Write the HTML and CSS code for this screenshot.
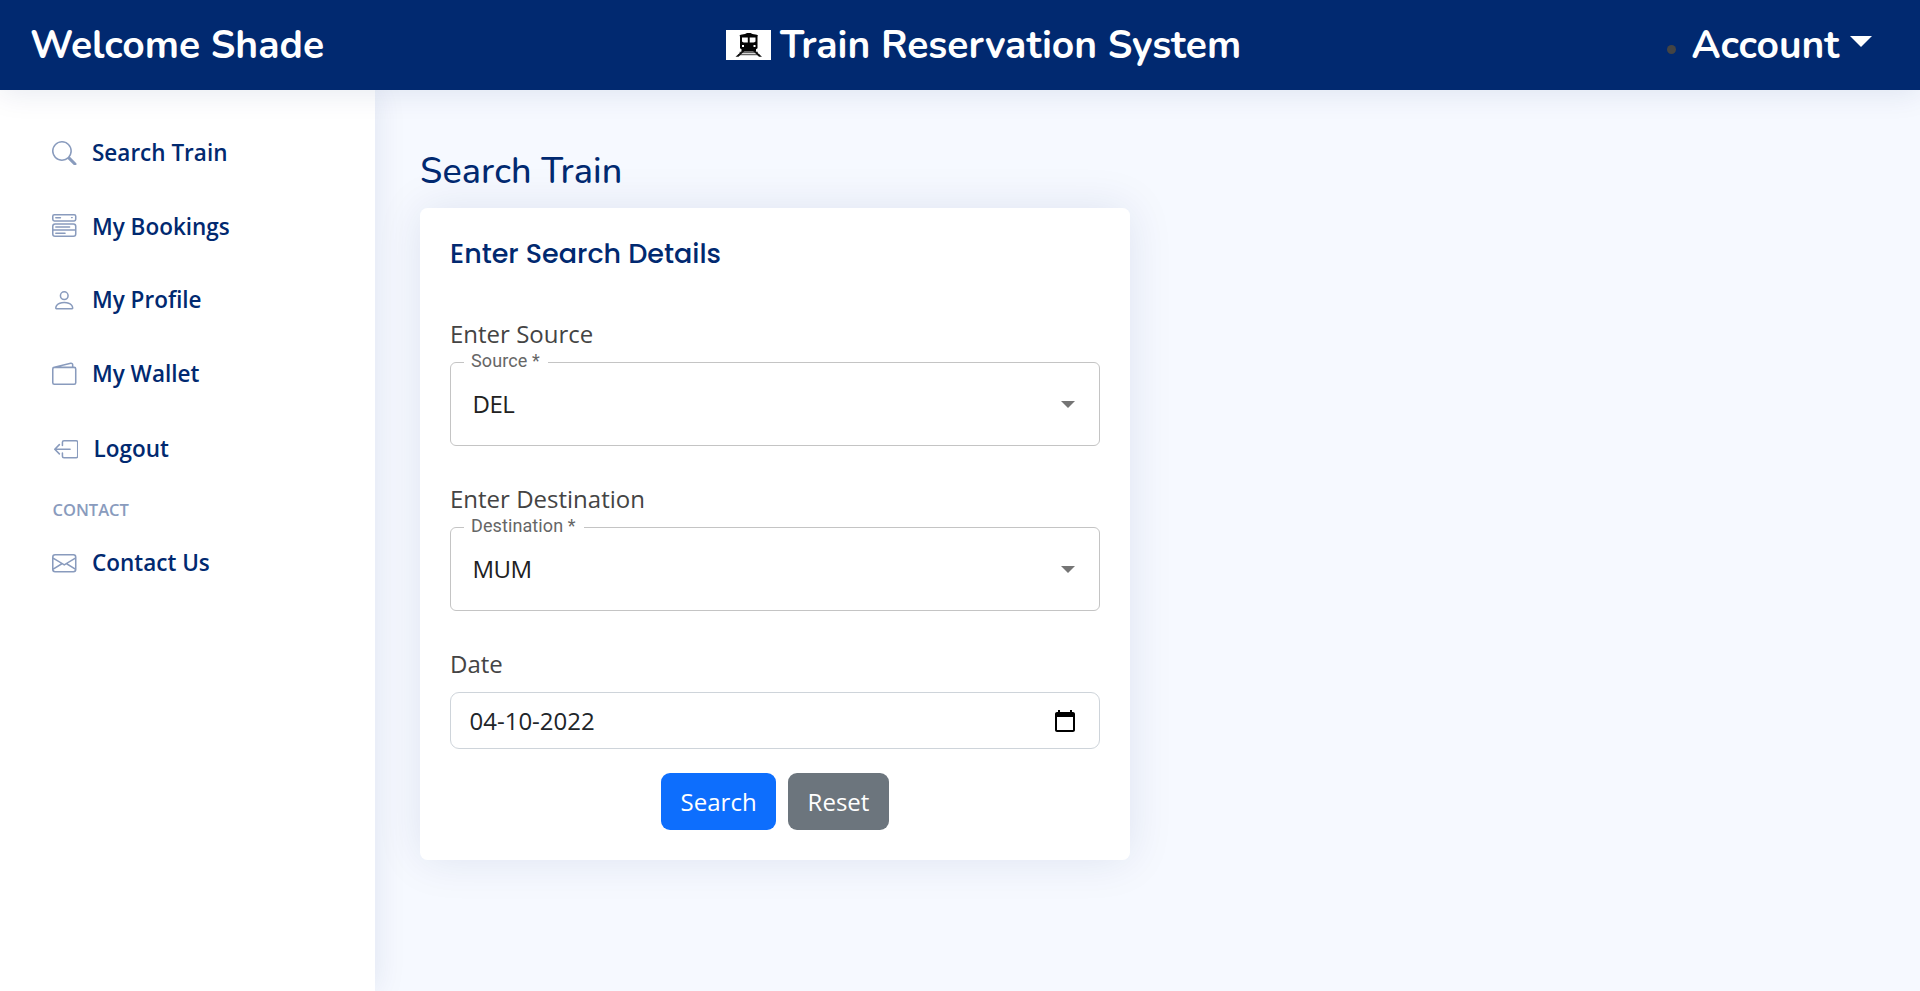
FILE: index.html
```html
<!DOCTYPE html>
<html lang="en">
<head>
<meta charset="utf-8">
<title>Train Reservation System</title>
<link rel="stylesheet" href="styles.css">
</head>
<body>
<header class="header">
  <span class="welcome">Welcome Shade</span>
  <div class="brand">
    <svg class="logo" viewBox="0 0 45 30"><rect width="45" height="30" fill="#fff"/><path d="M13.500 22.500H32M12 24.700H33.500" stroke="#666" stroke-width="1.300"/><path fill="#050505" fill-rule="evenodd" d="M13.500 5.500C15 4.500 17 4.200 19 4L21 3H24.500L26.500 4C28.500 4.200 30.500 4.500 32 5.500L31.500 6.500V18.300L30 19.300V21.500H15.500V19.300L14 18.300V6.500ZM16 7.500V11.500Q17 12.500 18 12.500H21.800V7.500ZM23.700 7.500V12.500H27.500Q28.500 12.500 29.500 11.500V7.500ZM16 15V17H18V15ZM27.500 15V17H29.500V15Z"/><path d="M16 21L9.500 26.700H12.500L18.500 21ZM29.500 21L36 26.700H33L27 21Z" fill="#111"/></svg>
    <span class="brand-name">Train Reservation System</span>
  </div>
  <div class="account"><span class="bullet"></span><span class="account-name">Account</span><span class="caret"></span></div>
</header>
<div class="page">
  <nav class="sidebar">
    <a class="nav-item"><svg viewBox="0 0 16 16"><path d="M11.742 10.344a6.5 6.5 0 1 0-1.397 1.398h-.001c.03.04.062.078.098.115l3.850 3.850a1 1 0 0 0 1.415-1.414l-3.850-3.850a1.007 1.007 0 0 0-.115-.1zM12 6.500a5.500 5.500 0 1 1-11 0 5.500 5.500 0 0 1 11 0z"/></svg><span>Search Train</span></a>
    <a class="nav-item"><svg viewBox="0 0 16 16"><path d="M0 1.500A1.500 1.500 0 0 1 1.500 0h13A1.500 1.500 0 0 1 16 1.500v2A1.500 1.500 0 0 1 14.500 5h-13A1.500 1.500 0 0 1 0 3.500v-2zM1.500 1a.5.5 0 0 0-.5.5v2a.5.5 0 0 0 .5.5h13a.5.5 0 0 0 .5-.5v-2a.5.5 0 0 0-.5-.5h-13z"/><path d="M2 2.500a.5.5 0 0 1 .5-.5h3a.5.5 0 0 1 0 1h-3a.5.5 0 0 1-.5-.5zm10.823.323-.396-.396A.25.25 0 0 1 12.604 2h.792a.25.25 0 0 1 .177.427l-.396.396a.25.25 0 0 1-.354 0zM0 8a2 2 0 0 1 2-2h12a2 2 0 0 1 2 2v5a2 2 0 0 1-2 2H2a2 2 0 0 1-2-2V8zm1 3v2a1 1 0 0 0 1 1h12a1 1 0 0 0 1-1v-2H1zm14-1V8a1 1 0 0 0-1-1H2a1 1 0 0 0-1 1v2h14zM2 8.500a.5.5 0 0 1 .5-.5h9a.5.5 0 0 1 0 1h-9a.5.5 0 0 1-.5-.5zm0 4a.5.5 0 0 1 .5-.5h6a.5.5 0 0 1 0 1h-6a.5.5 0 0 1-.5-.5z"/></svg><span>My Bookings</span></a>
    <a class="nav-item"><svg viewBox="0 0 16 16"><path d="M8 8a3 3 0 1 0 0-6 3 3 0 0 0 0 6zm2-3a2 2 0 1 1-4 0 2 2 0 0 1 4 0zm4 8c0 1-1 1-1 1H3s-1 0-1-1 1-4 6-4 6 3 6 4zm-1-.004c-.001-.246-.154-.986-.832-1.664C11.516 10.680 10.289 10 8 10c-2.290 0-3.516.68-4.168 1.332-.678.678-.83 1.418-.832 1.664h10z"/></svg><span>My Profile</span></a>
    <a class="nav-item"><svg viewBox="0 0 16 16"><path d="M12.136.326A1.500 1.500 0 0 1 14 1.780V3h.5A1.500 1.500 0 0 1 16 4.500v9a1.500 1.500 0 0 1-1.500 1.500h-13A1.500 1.500 0 0 1 0 13.500v-9a1.500 1.500 0 0 1 1.432-1.499L12.136.326zM5.562 3H13V1.780a.5.5 0 0 0-.621-.484L5.562 3zM1.500 4a.5.5 0 0 0-.5.5v9a.5.5 0 0 0 .5.5h13a.5.5 0 0 0 .5-.5v-9a.5.5 0 0 0-.5-.5h-13z"/></svg><span>My Wallet</span></a>
    <a class="nav-item nav-logout"><svg viewBox="0 0 16 16"><path fill-rule="evenodd" d="M6 12.500a.5.5 0 0 0 .5.5h8a.5.5 0 0 0 .5-.5v-9a.5.5 0 0 0-.5-.5h-8a.5.5 0 0 0-.5.5v2a.5.5 0 0 1-1 0v-2A1.500 1.500 0 0 1 6.500 2h8A1.500 1.500 0 0 1 16 3.500v9a1.500 1.500 0 0 1-1.500 1.500h-8A1.500 1.500 0 0 1 5 12.500v-2a.5.5 0 0 1 1 0v2z"/><path fill-rule="evenodd" d="M.146 8.354a.5.5 0 0 1 0-.708l3-3a.5.5 0 1 1 .708.708L1.707 7.500H10.500a.5.5 0 0 1 0 1H1.707l2.147 2.146a.5.5 0 0 1-.708.708l-3-3z"/></svg><span>Logout</span></a>
    <div class="nav-heading">CONTACT</div>
    <a class="nav-item"><svg viewBox="0 0 16 16"><path d="M0 4a2 2 0 0 1 2-2h12a2 2 0 0 1 2 2v8a2 2 0 0 1-2 2H2a2 2 0 0 1-2-2V4zm2-1a1 1 0 0 0-1 1v.217l7 4.200 7-4.200V4a1 1 0 0 0-1-1H2zm13 2.383-4.708 2.825L15 11.105V5.383zm-.034 6.876-5.640-3.471L8 9.583l-1.326-.795-5.640 3.470A1 1 0 0 0 2 13h12a1 1 0 0 0 .966-.741zM1 11.105l4.708-2.897L1 5.383v5.722z"/></svg><span>Contact Us</span></a>
  </nav>
  <main class="main">
    <h1 class="page-title">Search Train</h1>
    <section class="card">
      <h2 class="card-title">Enter Search Details</h2>
      <div class="label">Enter Source</div>
      <fieldset class="select"><legend>Source *</legend><div class="select-row"><span>DEL</span><i class="arrow"></i></div></fieldset>
      <div class="label label-next">Enter Destination</div>
      <fieldset class="select"><legend>Destination *</legend><div class="select-row"><span>MUM</span><i class="arrow"></i></div></fieldset>
      <div class="label label-next">Date</div>
      <div class="date"><span>04-10-2022</span><svg viewBox="0 0 24 24"><path d="M20 3h-1V1h-2v2H7V1H5v2H4c-1.100 0-2 .9-2 2v16c0 1.100.9 2 2 2h16c1.100 0 2-.9 2-2V5c0-1.100-.9-2-2-2zm0 18H4V8h16v13z"/></svg></div>
      <div class="actions"><button class="btn btn-search">Search</button><button class="btn btn-reset">Reset</button></div>
    </section>
  </main>
</div>
</body>
</html>
```
FILE: styles.css
```css
* { box-sizing: border-box; }
body {
  margin: 0;
  height: 991px;
  overflow: hidden;
  display: flex;
  flex-direction: column;
  background: #f6f9ff;
  color: #444;
  font: 24px/36px "Open Sans", sans-serif;
}
.header {
  position: relative;
  z-index: 2;
  flex: none;
  height: 90px;
  padding: 0 48px 0 30px;
  display: grid;
  grid-template-columns: 696px 1fr auto;
  align-items: center;
  background: #012970;
  box-shadow: 0 3px 30px rgba(1, 41, 112, 0.1);
  color: #fff;
  font: 700 39px/48px Nunito, Lato, sans-serif;
  white-space: nowrap;
}
.welcome, .brand-name, .account-name { padding-top: 2px; }
.brand { display: flex; align-items: center; gap: 9px; }
.logo { width: 45px; height: 30px; }
.account { display: flex; align-items: center; }
.bullet { width: 9px; height: 9px; margin: 9px 16px 0 0; border-radius: 50%; background: #444; }
.caret { margin: -7px 0 0 10.700px; border: solid transparent; border-width: 11px 11.500px 0; border-top-color: #fff; }
.page { flex: 1; display: flex; min-height: 0; }
.sidebar {
  flex: none;
  width: 375px;
  padding: 45px 30px 0 52px;
  background: #fff;
  box-shadow: 0 0 30px rgba(1, 41, 112, 0.1);
}
.nav-item {
  display: flex;
  align-items: center;
  gap: 15.500px;
  height: 36px;
  margin-bottom: 37.600px;
  color: #012970;
  font-size: 22.500px;
  font-weight: 600;
}
.nav-item svg { width: 24.500px; height: 24.500px; fill: #899bbd; }
.nav-logout { margin: 39.500px 0 31px 1.500px; }
.nav-heading { height: 24px; margin-bottom: 22.500px; padding-left: 0.500px; color: #899bbd; font-size: 16.500px; font-weight: 600; line-height: 24px; }
.main { padding: 59px 45px; }
.page-title { margin: 0 0 13px; color: #012970; font: 500 36px/46px Nunito, Lato, sans-serif; letter-spacing: 0.150px; }
.card {
  width: 710px;
  height: 652px;
  padding: 30px;
  border-radius: 7.500px;
  background: #fff;
  box-shadow: 0 0 45px rgba(1, 41, 112, 0.1);
}
.card-title { margin: 0 0 46px; color: #012970; font: 500 27px/32px Poppins, Inter, sans-serif; }
.label-next { margin-top: 35px; }
.select {
  height: 94px;
  margin: 0;
  padding: 0 24px 0 13px;
  border: 1px solid #c4c4c4;
  border-radius: 6px;
}
.select legend { height: 20px; padding: 0 8.500px 0 7px; color: #666; font: 18px/18px Roboto, sans-serif; letter-spacing: 0.100px; }
.select-row { display: flex; align-items: center; justify-content: space-between; height: 64px; padding-left: 8.500px; color: #212121; letter-spacing: -0.500px; }
.arrow { border: solid transparent; border-width: 7px 7.500px 0; border-top-color: #757575; }
.date {
  display: flex;
  align-items: center;
  justify-content: space-between;
  height: 57px;
  margin: 10px 0 24px;
  padding: 0 22px 0 18.500px;
  border: 1px solid #ced4da;
  border-radius: 9px;
  color: #212529;
}
.date svg { width: 24px; height: 24px; }
.actions { display: flex; justify-content: center; gap: 12px; }
.btn { height: 57px; padding: 0 19.500px; border: 0; border-radius: 9px; color: #fff; font: inherit; }
.btn-search { background: #0d6efd; }
.btn-reset { background: #6c757d; }
```
